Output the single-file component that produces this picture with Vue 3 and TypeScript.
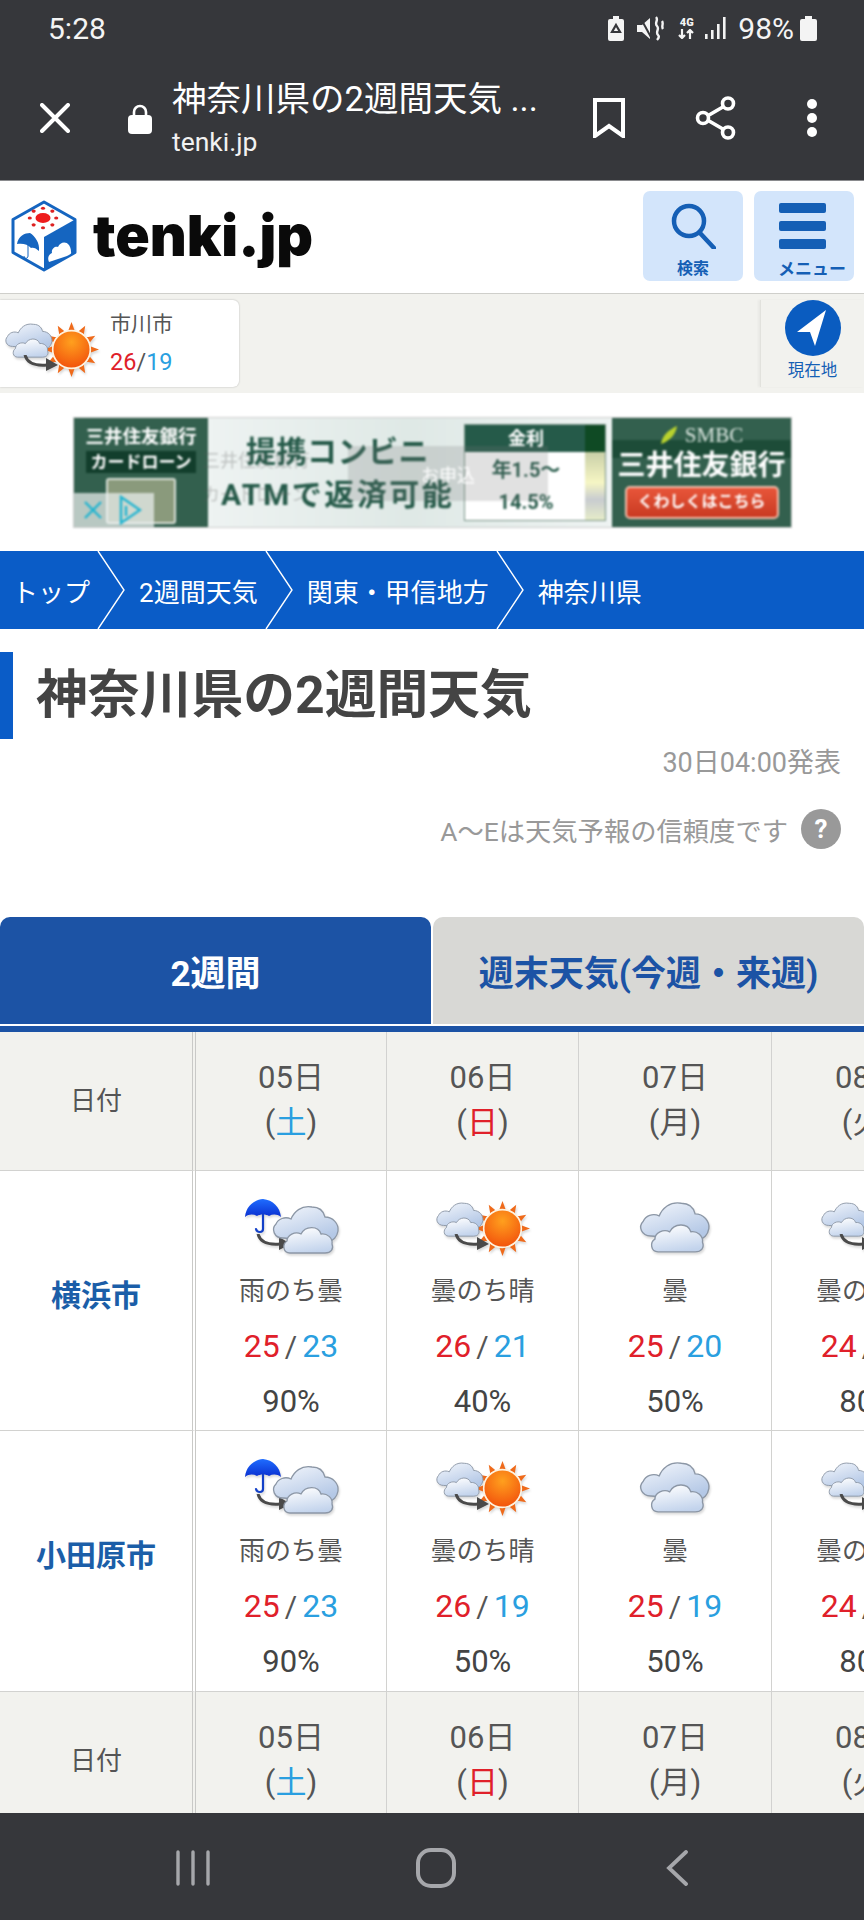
<script setup lang="ts">
interface Day { date: string; week: string; tone: string }
interface Cell { icon: string; label: string; high: number; low: number; pop: string }
interface City { name: string; cells: Cell[] }

const days: Day[] = [
  { date: '05日', week: '土', tone: 'sat' },
  { date: '06日', week: '日', tone: 'sun' },
  { date: '07日', week: '月', tone: '' },
  { date: '08日', week: '火', tone: '' },
]
const cities: City[] = [
  {
    name: '横浜市',
    cells: [
      { icon: 'rain-cloud', label: '雨のち曇', high: 25, low: 23, pop: '90%' },
      { icon: 'cloud-sun', label: '曇のち晴', high: 26, low: 21, pop: '40%' },
      { icon: 'cloud', label: '曇', high: 25, low: 20, pop: '50%' },
      { icon: 'cloud-rain', label: '曇のち雨', high: 24, low: 21, pop: '80%' },
    ],
  },
  {
    name: '小田原市',
    cells: [
      { icon: 'rain-cloud', label: '雨のち曇', high: 25, low: 23, pop: '90%' },
      { icon: 'cloud-sun', label: '曇のち晴', high: 26, low: 19, pop: '50%' },
      { icon: 'cloud', label: '曇', high: 25, low: 19, pop: '50%' },
      { icon: 'cloud-rain', label: '曇のち雨', high: 24, low: 20, pop: '80%' },
    ],
  },
]
const rays: number[] = Array.from({ length: 12 }, (_, i) => i * 30)
const crumbs: string[] = ['トップ', '2週間天気', '関東・甲信地方', '神奈川県']
const sunDots: number[] = Array.from({ length: 8 }, (_, i) => i * 45)
</script>

<template>
  <div class="phone">
    <svg class="defs" aria-hidden="true">
      <defs>
        <linearGradient id="cloudBack" x1="0" y1="0" x2="0.6" y2="1">
          <stop offset="0" stop-color="#f4f7fc" />
          <stop offset="1" stop-color="#b4c8e6" />
        </linearGradient>
        <linearGradient id="cloudFront" x1="0.2" y1="0" x2="0.5" y2="1">
          <stop offset="0" stop-color="#ffffff" />
          <stop offset="1" stop-color="#c2d3ec" />
        </linearGradient>
        <radialGradient id="sunFill" cx="0.5" cy="0.3" r="0.8">
          <stop offset="0" stop-color="#ffa01e" />
          <stop offset="1" stop-color="#f0480a" />
        </radialGradient>
        <linearGradient id="umbFill" x1="0" y1="0" x2="0" y2="1">
          <stop offset="0" stop-color="#1f6dff" />
          <stop offset="1" stop-color="#0a2fd0" />
        </linearGradient>
        <symbol id="cloud" viewBox="0 0 70 50">
          <path d="M12 34C3 34 0 25 5 20C7 15 14 12 20 15C23 8 30 1 41 3C50 3 53 9 54 13C62 13 68 20 67 27C66 33 62 37 58 37Z" fill="url(#cloudBack)" stroke="#8c97a6" stroke-width="1.3" />
          <path d="M19 49C12 49 11 40 16 37C16 31 24 27 30 30C34 22 47 21 50 30C56 29 62 34 61 40C63 45 60 49 54 49Z" fill="url(#cloudFront)" stroke="#8c97a6" stroke-width="1.3" />
        </symbol>
        <symbol id="sun" viewBox="0 0 56 56">
          <polygon v-for="a in rays" :key="a" points="25,9 31,9 28,1" fill="#ef6a1a" :transform="`rotate(${a} 28 28)`" />
          <circle cx="28" cy="28" r="18.5" fill="url(#sunFill)" stroke="#fff3df" stroke-width="1.6" />
        </symbol>
        <symbol id="umbrella" viewBox="0 0 38 36">
          <path d="M19 1C9 2 2 9 1 19C5 16 9 16 13 18C16 16 22 16 25 18C29 16 33 16 37 19C36 9 29 2 19 1Z" fill="url(#umbFill)" />
          <path d="M19 16V31C19 35 13 35 12 31" fill="none" stroke="#1340c8" stroke-width="2.2" stroke-linecap="round" />
        </symbol>
        <symbol id="arrow" viewBox="0 0 36 16">
          <path d="M2 0C4 8 12 11 24 10" fill="none" stroke="#4a4a4a" stroke-width="3" />
          <polygon points="23,3 35,10 23,16" fill="#4a4a4a" />
        </symbol>
        <symbol id="ic-rain-cloud" viewBox="0 0 100 60">
          <use href="#umbrella" x="3" y="2" width="38" height="36" />
          <use href="#arrow" x="15" y="38" width="36" height="16" />
          <use href="#cloud" x="30" y="8" width="70" height="50" />
        </symbol>
        <symbol id="ic-cloud-sun" viewBox="0 0 100 60">
          <use href="#sun" x="41" y="4" width="57" height="57" />
          <use href="#cloud" x="2" y="5" width="50" height="36" />
          <use href="#arrow" x="21" y="38" width="36" height="16" />
        </symbol>
        <symbol id="ic-cloud" viewBox="0 0 100 60">
          <use href="#cloud" x="13" y="4" width="74" height="53" />
        </symbol>
        <symbol id="ic-cloud-rain" viewBox="0 0 100 60">
          <use href="#cloud" x="2" y="5" width="50" height="36" />
          <use href="#arrow" x="21" y="38" width="36" height="16" />
          <use href="#umbrella" x="54" y="12" width="38" height="36" />
        </symbol>
      </defs>
    </svg>

    <div class="status">
      <span class="clock">5:28</span>
      <div class="status-right">
        <svg class="st-batsave" viewBox="0 0 16 25">
          <path d="M5 0H11V3H14A2 2 0 0 1 16 5V23A2 2 0 0 1 14 25H2A2 2 0 0 1 0 23V5A2 2 0 0 1 2 3H5Z" fill="#f4f4f4" />
          <path d="M8 9L12 16H4Z" fill="none" stroke="#36373b" stroke-width="2.2" />
        </svg>
        <svg class="st-mute" viewBox="0 0 27 25">
          <path d="M0 9H5L13 2V23L5 16H0Z" fill="#f4f4f4" />
          <path d="M3 1L15 23" stroke="#36373b" stroke-width="2" />
          <path d="M19 1C22 4 17 7 20 10C23 13 18 16 21 19C23 21 21 23 20 24M25 5C27 8 24 10 26 13" fill="none" stroke="#f4f4f4" stroke-width="2.4" />
        </svg>
        <div class="st-net">
          <span class="st-4g">4G</span>
          <svg viewBox="0 0 17 10" class="st-arrows">
            <path d="M4 0V9M1 6L4 9L7 6M12 10V1M9 4L12 1L15 4" fill="none" stroke="#f4f4f4" stroke-width="2.2" />
          </svg>
        </div>
        <svg class="st-signal" viewBox="0 0 22 22">
          <rect x="0" y="17" width="2.6" height="5" fill="#f4f4f4" />
          <rect x="6" y="13" width="2.6" height="9" fill="#f4f4f4" />
          <rect x="12" y="7" width="2.6" height="15" fill="#f4f4f4" />
          <rect x="18" y="0" width="2.6" height="22" fill="#f4f4f4" />
        </svg>
        <span class="pct">98%</span>
        <svg class="st-bat" viewBox="0 0 17 25">
          <path d="M5 0H12V3H15A2 2 0 0 1 17 5V23A2 2 0 0 1 15 25H2A2 2 0 0 1 0 23V5A2 2 0 0 1 2 3H5Z" fill="#f4f4f4" />
        </svg>
      </div>
    </div>

    <div class="chrome">
      <svg class="ch-x" viewBox="0 0 30 30"><path d="M2 2L28 28M28 2L2 28" stroke="#fff" stroke-width="4" stroke-linecap="round" /></svg>
      <svg class="ch-lock" viewBox="0 0 24 30">
        <path d="M6 13V8A6 6 0 0 1 18 8V13" fill="none" stroke="#fff" stroke-width="2.6" />
        <rect x="0" y="11" width="24" height="19" rx="4" fill="#fff" />
      </svg>
      <div class="ch-text">
        <div class="ch-title">神奈川県の2週間天気 ...</div>
        <div class="ch-url">tenki.jp</div>
      </div>
      <svg class="ch-book" viewBox="0 0 32 40"><path d="M2 2H30V38L16 28L2 38Z" fill="none" stroke="#fff" stroke-width="4" /></svg>
      <svg class="ch-share" viewBox="0 0 42 44">
        <path d="M33 8L9 22L33 36" fill="none" stroke="#fff" stroke-width="3.6" />
        <circle cx="33" cy="7.5" r="5.5" fill="#36373b" stroke="#fff" stroke-width="3.6" />
        <circle cx="8" cy="22" r="5.5" fill="#36373b" stroke="#fff" stroke-width="3.6" />
        <circle cx="33" cy="36.5" r="5.5" fill="#36373b" stroke="#fff" stroke-width="3.6" />
      </svg>
      <div class="ch-dots"><i></i><i></i><i></i></div>
    </div>

    <header class="site">
      <div class="logo">
        <svg class="cube" viewBox="0 0 66 72">
          <path d="M33 2L64 19.5V52.5L33 70L2 52.5V19.5Z" fill="#fff" stroke="#1565c0" stroke-width="3" stroke-linejoin="round" />
          <path d="M33 37L64 19.5V52.5L33 70Z" fill="#1565c0" />
          <ellipse cx="32" cy="18" rx="7.5" ry="5" fill="#ee1c1c" />
          <circle v-for="a in sunDots" :key="a" cx="32" cy="6.5" r="1.8" fill="#dd2222" :transform="`translate(32 18) scale(1.15 0.85) rotate(${a}) translate(-32 -18)`" />
          <path d="M6 44C7 36 14 33 19 33C24 36 29 43 28 51C25 48 22 47 20 48C17 44 11 43 6 44Z" fill="#1565c0" />
          <path d="M17 44V56C17 59 13 59 13 56" fill="none" stroke="#1565c0" stroke-width="1" />
          <path d="M38 62C36 58 38 54 41 53C40 49 44 46 47 47C49 42 55 41 58 45C60 48 60 51 60 52C61 54 58 55 56 56Z" fill="#fff" />
        </svg>
        <span class="wordmark">tenki.jp</span>
      </div>
      <div class="site-btns">
        <div class="site-btn">
          <svg class="ic-search" viewBox="0 0 46 46">
            <circle cx="19" cy="18" r="15" fill="none" stroke="#155fb5" stroke-width="4.5" />
            <path d="M30 30L44 45" stroke="#155fb5" stroke-width="4.5" stroke-linecap="round" />
          </svg>
          <span>検索</span>
        </div>
        <div class="site-btn">
          <div class="burger"><i></i><i></i><i></i></div>
          <span class="menu-label">メニュー</span>
        </div>
      </div>
    </header>

    <section class="locbar">
      <div class="loc-card">
        <svg class="wx loc-wx" viewBox="0 0 100 60"><use href="#ic-cloud-sun" /></svg>
        <div class="loc-text">
          <div class="loc-name">市川市</div>
          <div class="loc-temp"><span class="hi">26</span><span class="sl">/</span><span class="lo">19</span></div>
        </div>
      </div>
      <div class="loc-here">
        <svg class="here-ic" viewBox="0 0 56 56">
          <circle cx="28" cy="28" r="28" fill="#0a5cc0" />
          <path d="M41 10L12 32L25 32L30 46Z" fill="#fff" />
        </svg>
        <span>現在地</span>
      </div>
    </section>

    <section class="ad-wrap">
      <div class="ad">
        <div class="ad-left">
          <div class="ad-l1">三井住友銀行</div>
          <div class="ad-l2">カードローン</div>
          <div class="ad-card"></div>
        </div>
        <div class="ad-mid">
          <div class="ad-copy">
            <div class="ad-c1">提携コンビニ</div>
            <div class="ad-c2">ATMで返済可能</div>
          </div>
          <div class="ad-rate">
            <div class="ad-rate-h">金利</div>
            <div class="ad-rate-b"><span>年1.5〜</span><span>14.5%</span></div>
          </div>
        </div>
        <div class="ad-right">
          <div class="ad-smbc">
            <svg class="ad-leaf" viewBox="0 0 18 20"><path d="M1 19C2 11 8 5 17 1C16 9 10 16 1 19Z" fill="#b9d22e" /></svg>
            <span>SMBC</span>
          </div>
          <div class="ad-bank">三井住友銀行</div>
          <div class="ad-cta">くわしくはこちら</div>
        </div>
        <div class="ad-veil"><span>お申込</span></div>
        <div class="ad-ghost">三井住友銀行<br />カードローン</div>
        <div class="ad-choice">
          <svg viewBox="0 0 20 20" class="ad-x"><path d="M2 2L18 18M18 2L2 18" stroke="#22b4d0" stroke-width="2.4" /></svg>
          <svg viewBox="0 0 24 30" class="ad-i"><path d="M3 2L22 15L3 28ZM8 11V21" fill="none" stroke="#22b4d0" stroke-width="2.4" /></svg>
        </div>
      </div>
    </section>

    <nav class="crumbs">
      <div v-for="c in crumbs" :key="c" class="crumb">
        <span>{{ c }}</span>
        <svg v-if="c !== '神奈川県'" class="chev" viewBox="0 0 28 78" preserveAspectRatio="none">
          <path d="M1 0L27 39L1 78" fill="none" stroke="#fff" stroke-width="1.4" />
        </svg>
      </div>
    </nav>

    <h1 class="title">神奈川県の2週間天気</h1>
    <div class="stamp">30日04:00発表</div>
    <div class="trust">
      <span>A〜Eは天気予報の信頼度です</span>
      <span class="q">?</span>
    </div>

    <div class="tabs">
      <div class="tab active">2週間</div>
      <div class="tab">週末天気(今週・来週)</div>
    </div>
    <div class="tabline"></div>

    <div class="table">
      <div class="grid">
        <div class="cell head first">日付</div>
        <div v-for="d in days" :key="'a' + d.date" class="cell head">
          <span>{{ d.date }}</span>
          <span>(<b :class="d.tone">{{ d.week }}</b>)</span>
        </div>
        <template v-for="city in cities" :key="city.name">
          <div class="cell first cityname">{{ city.name }}</div>
          <div v-for="(c, i) in city.cells" :key="city.name + i" class="cell wxcell">
            <svg class="wx" viewBox="0 0 100 60"><use :href="'#ic-' + c.icon" /></svg>
            <div class="wx-label">{{ c.label }}</div>
            <div class="wx-temp"><span class="hi">{{ c.high }}</span><span class="sl">/</span><span class="lo">{{ c.low }}</span></div>
            <div class="wx-pop">{{ c.pop }}</div>
          </div>
        </template>
        <div class="cell head first">日付</div>
        <div v-for="d in days" :key="'b' + d.date" class="cell head">
          <span>{{ d.date }}</span>
          <span>(<b :class="d.tone">{{ d.week }}</b>)</span>
        </div>
      </div>
    </div>

    <footer class="navbar">
      <svg class="nav-recent" viewBox="0 0 34 36">
        <path d="M2 2V34M17 2V34M32 2V34" stroke="#a6a7ab" stroke-width="3.4" stroke-linecap="round" />
      </svg>
      <svg class="nav-home" viewBox="0 0 40 40"><rect x="2" y="2" width="36" height="36" rx="13" fill="none" stroke="#a6a7ab" stroke-width="4" /></svg>
      <svg class="nav-back" viewBox="0 0 22 36"><path d="M20 2L3 18L20 34" fill="none" stroke="#a6a7ab" stroke-width="3.8" stroke-linecap="round" /></svg>
    </footer>
  </div>
</template>

<style>
html, body { margin: 0; background: #fff; }
</style>

<style scoped>
* { box-sizing: border-box; }
.phone {
  width: 864px;
  height: 1920px;
  display: flex;
  flex-direction: column;
  overflow: hidden;
  background: #fff;
  color: #444;
  font-family: Roboto, "Noto Sans CJK JP", sans-serif;
}
.defs { position: absolute; width: 0; height: 0; }

.status {
  height: 60px;
  flex: none;
  background: #36373b;
  color: #f4f4f4;
  display: flex;
  align-items: center;
  justify-content: space-between;
  padding: 0 47px 4px 48px;
}
.clock { font-size: 30px; }
.status-right { display: flex; align-items: center; }
.st-batsave { width: 16px; height: 25px; margin-right: 13px; }
.st-mute { width: 27px; height: 25px; margin-right: 14px; }
.st-net { width: 17px; display: flex; flex-direction: column; align-items: center; margin-right: 10px; }
.st-4g { font-size: 11px; line-height: 12px; font-weight: 900; }
.st-arrows { width: 17px; height: 10px; }
.st-signal { width: 22px; height: 22px; margin-right: 11px; }
.pct { font-size: 30px; margin-right: 6px; }
.st-bat { width: 17px; height: 25px; }

.chrome {
  height: 121px;
  flex: none;
  background: #36373b;
  display: flex;
  align-items: center;
  padding-bottom: 8px;
  border-bottom: 1px solid #8a8b8e;
  position: relative;
}
.ch-x { width: 30px; height: 30px; margin-left: 40px; margin-top: 4px; }
.ch-lock { width: 24px; height: 30px; margin-left: 58px; margin-top: 6px; }
.ch-text { width: 400px; margin-left: 20px; color: #fff; }
.ch-title { font-size: 34.5px; line-height: 48px; white-space: nowrap; }
.ch-url { font-size: 26.5px; line-height: 30px; color: #f2f2f2; margin-top: 4px; }
.ch-book { width: 32px; height: 40px; margin-left: 21px; margin-top: 4px; }
.ch-share { width: 42px; height: 44px; margin-left: 70px; margin-top: 4px; }
.ch-dots { margin-left: 70px; display: flex; flex-direction: column; gap: 4px; margin-top: 4px; }
.ch-dots i { width: 10px; height: 10px; border-radius: 50%; background: #fff; display: block; }

.site {
  height: 113px;
  flex: none;
  display: flex;
  justify-content: space-between;
  align-items: flex-start;
  border-bottom: 1px solid #cfcfcb;
  padding: 10px 10px 0 11px;
}
.logo { display: flex; align-items: center; margin-top: 9px; }
.cube { width: 66px; height: 72px; }
.wordmark {
  font-family: Inter, Roboto, sans-serif;
  font-weight: 900;
  font-size: 57px;
  line-height: 72px;
  color: #0a0a0a;
  margin-left: 16px;
}
.site-btns { display: flex; gap: 11px; }
.site-btn {
  width: 100px;
  height: 90px;
  background: #d3e5fb;
  border-radius: 7px;
  display: flex;
  flex-direction: column;
  align-items: center;
  font-size: 16px;
  font-weight: 700;
  color: #155fb5;
  padding-top: 12px;
}
.site-btn span { line-height: 24px; margin-top: 8px; white-space: nowrap; }
.ic-search { width: 46px; height: 46px; flex: none; }
.burger { width: 47px; height: 46px; flex: none; display: flex; flex-direction: column; justify-content: space-between; margin-left: -4px; }
.burger i { height: 10px; background: #155fb5; border-radius: 2px; display: block; }
.site-btn .menu-label { margin-left: 16px; font-size: 17px; }

.locbar {
  height: 99px;
  flex: none;
  background: #f2f2ee;
  display: flex;
  justify-content: space-between;
  padding-top: 6px;
}
.loc-card {
  width: 239px;
  height: 87px;
  background: #fff;
  border-radius: 0 6px 6px 0;
  box-shadow: 0 0 2px rgba(0, 0, 0, 0.25);
  display: flex;
  align-items: center;
}
.loc-wx { margin-top: 6px; margin-left: 2px; }
.loc-text { margin-left: 8px; }
.loc-name { font-size: 21px; line-height: 36px; color: #555; }
.loc-temp { font-size: 23.5px; line-height: 40px; }
.loc-here {
  width: 104px;
  border-left: 1px solid #e2e2dd;
  box-shadow: -2px 0 2px rgba(0, 0, 0, 0.04);
  height: 87px;
  display: flex;
  flex-direction: column;
  align-items: center;
  font-size: 16.5px;
  color: #155fb5;
}
.here-ic { width: 56px; height: 56px; flex: none; }
.loc-here span { line-height: 28px; margin-top: 1px; }

.hi { color: #e0202a; }
.lo { color: #2a9fe0; }
.sl { color: #555; }

.ad-wrap {
  height: 158px;
  flex: none;
  padding: 24px 72px 0 73px;
}
.ad {
  position: relative;
  width: 719px;
  height: 111px;
  border: 1px solid #ccc;
  display: flex;
  overflow: hidden;
  filter: blur(0.8px);
}
.ad-left {
  width: 134px;
  flex: none;
  background: #33604e;
  color: #fff;
  display: flex;
  flex-direction: column;
  align-items: center;
  font-weight: 700;
  padding-top: 8px;
}
.ad-l1 { font-size: 18.5px; line-height: 22px; white-space: nowrap; }
.ad-l2 { font-size: 17px; line-height: 22px; background: #123e2c; padding: 0 4px; margin-top: 3px; white-space: nowrap; }
.ad-card { width: 70px; height: 46px; margin-top: 5px; background: #8a9a7c; border: 2px solid #d8dfd6; border-radius: 3px; }
.ad-mid {
  flex: 1;
  background: linear-gradient(90deg, #eef3f2, #dfe9e6 50%, #eef3f2);
  display: flex;
  align-items: center;
  justify-content: space-between;
  padding-right: 6px;
  padding-left: 13px;
}
.ad-copy { text-align: center; color: #255a49; font-weight: 700; }
.ad-c1 { font-size: 30px; line-height: 44px; white-space: nowrap; letter-spacing: 0.5px; }
.ad-c2 { font-size: 30px; line-height: 42px; white-space: nowrap; letter-spacing: 2.5px; }
.ad-rate { width: 142px; height: 97px; border: 1px solid #7a9488; background: #fff; display: flex; flex-direction: column; }
.ad-rate-h { height: 27px; background: linear-gradient(90deg, #255a49 86%, #0f4a24 86%); color: #fff; font-size: 18px; font-weight: 700; line-height: 27px; text-align: center; padding-right: 18px; }
.ad-rate-b {
  flex: 1;
  display: flex;
  flex-direction: column;
  align-items: center;
  justify-content: center;
  font-size: 20px;
  line-height: 32px;
  color: #255a49;
  font-weight: 700;
  padding-right: 18px;
  background: linear-gradient(90deg, #fff 86%, transparent 86%), linear-gradient(180deg, #c9cfa8, #f6f6c4 45%, #c8ccd0 70%, #e6ecc8);
}
.ad-right {
  width: 179px;
  flex: none;
  background: linear-gradient(180deg, #33604e 22px, #1d4c38 22px, #1d4c38 40px, #33604e 40px);
  color: #fff;
  display: flex;
  flex-direction: column;
  align-items: center;
  padding-top: 6px;
}
.ad-smbc { font-family: "Liberation Serif", serif; font-size: 21px; line-height: 22px; color: #d7e3dc; display: flex; align-items: center; gap: 7px; }
.ad-leaf { width: 18px; height: 20px; }
.ad-bank { font-size: 28px; line-height: 36px; font-weight: 700; white-space: nowrap; margin-top: 2px; }
.ad-cta {
  margin-top: 2px;
  width: 154px;
  height: 33px;
  background: linear-gradient(180deg, #e8563a, #c93a22);
  border: 2px solid #f1bdaa;
  border-radius: 5px;
  font-size: 16px;
  font-weight: 700;
  line-height: 28px;
  text-align: center;
  white-space: nowrap;
}
.ad-veil {
  position: absolute;
  left: 274px;
  top: 28px;
  width: 200px;
  height: 55px;
  background: rgba(120, 120, 120, 0.22);
  display: flex;
  align-items: center;
  justify-content: center;
  color: #fff;
  font-size: 18px;
}
.ad-ghost { position: absolute; left: 128px; top: 26px; color: rgba(90, 90, 90, 0.32); font-size: 18px; line-height: 34px; white-space: nowrap; }
.ad-choice {
  position: absolute;
  left: 0;
  bottom: 0;
  width: 80px;
  height: 34px;
  background: rgba(235, 240, 240, 0.72);
  display: flex;
  align-items: center;
  padding-left: 9px;
  gap: 15px;
}
.ad-x { width: 20px; height: 20px; }
.ad-i { width: 24px; height: 30px; }

.crumbs {
  height: 78px;
  flex: none;
  background: #0a5cc7;
  color: #fff;
  display: flex;
  font-size: 26px;
  overflow: hidden;
}
.crumb {
  position: relative;
  display: flex;
  align-items: center;
  padding: 0 35px 0 14px;
  white-space: nowrap;
}
.crumb:first-child { padding-left: 12px; }
.chev { position: absolute; right: 0; top: 0; width: 28px; height: 78px; }

.title {
  margin: 23px 0 0;
  height: 87px;
  flex: none;
  border-left: 13px solid #0a5cc7;
  padding-left: 23px;
  font-size: 51.8px;
  font-weight: 700;
  line-height: 87px;
  color: #444;
  white-space: nowrap;
}
.stamp {
  margin-top: 6px;
  flex: none;
  height: 36px;
  line-height: 36px;
  text-align: right;
  padding-right: 23px;
  font-size: 27px;
  color: #999;
}
.trust {
  margin-top: 28px;
  flex: none;
  height: 40px;
  display: flex;
  justify-content: flex-end;
  align-items: center;
  padding-right: 23px;
  font-size: 26.3px;
  color: #999;
}
.q {
  width: 40px;
  height: 40px;
  border-radius: 50%;
  background: #999;
  color: #fff;
  font-weight: 700;
  font-size: 26px;
  line-height: 40px;
  text-align: center;
  margin-left: 13px;
}
.tabs {
  margin-top: 68px;
  height: 107px;
  flex: none;
  display: flex;
  gap: 2px;
}
.tab {
  flex: 1;
  border-radius: 10px 10px 0 0;
  background: #d8d8d5;
  color: #1c53a5;
  font-size: 35px;
  font-weight: 700;
  display: flex;
  align-items: center;
  justify-content: center;
  white-space: nowrap;
}
.tab.active { background: #1c53a5; color: #fff; }
.tabline { margin-top: 2px; height: 6px; flex: none; background: #1c53a5; }

.table { flex: 1; min-height: 0; overflow: hidden; position: relative; }
.grid {
  display: grid;
  grid-template-columns: 196px 191px 192px 193px 193px;
  grid-template-rows: 139px 260px 261px 139px;
}
.cell {
  border-right: 1px solid #d2d2d0;
  border-bottom: 1px solid #d2d2d0;
  display: flex;
  flex-direction: column;
  align-items: center;
}
.head {
  background: #f2f2ee;
  justify-content: center;
  font-size: 31px;
  line-height: 45px;
  padding-bottom: 2px;
  color: #555;
}
.head b { font-weight: 400; }
.head .sat { color: #2a9fe0; }
.head .sun { color: #e0202a; }
.head.first { font-size: 26px; padding-bottom: 0; }
.first { border-right: 4px double #c9c9c7; }
.cityname {
  justify-content: center;
  font-size: 30px;
  font-weight: 700;
  color: #1b5ea8;
  padding-bottom: 16px;
}
.wxcell { padding-top: 25px; }
.wx { width: 100px; height: 60px; flex: none; filter: drop-shadow(1px 2px 1px rgba(0, 0, 0, 0.15)); }
.wx-label { font-size: 26px; line-height: 52px; margin-top: 9px; color: #555; white-space: nowrap; }
.wx-temp { font-size: 32px; line-height: 54px; white-space: nowrap; margin-top: 2px; }
.wx-temp .sl { margin: 0 5px; font-size: 30px; }
.wx-pop { font-size: 31px; line-height: 56px; color: #444; }

.navbar {
  height: 107px;
  flex: none;
  background: #36373b;
  display: flex;
  align-items: center;
  padding-top: 2px;
  box-shadow: 0 -2px 3px rgba(0, 0, 0, 0.25);
}
.nav-recent { width: 34px; height: 36px; margin-left: 176px; }
.nav-home { width: 40px; height: 40px; margin-left: 206px; }
.nav-back { width: 22px; height: 36px; margin-left: 210px; }
</style>
